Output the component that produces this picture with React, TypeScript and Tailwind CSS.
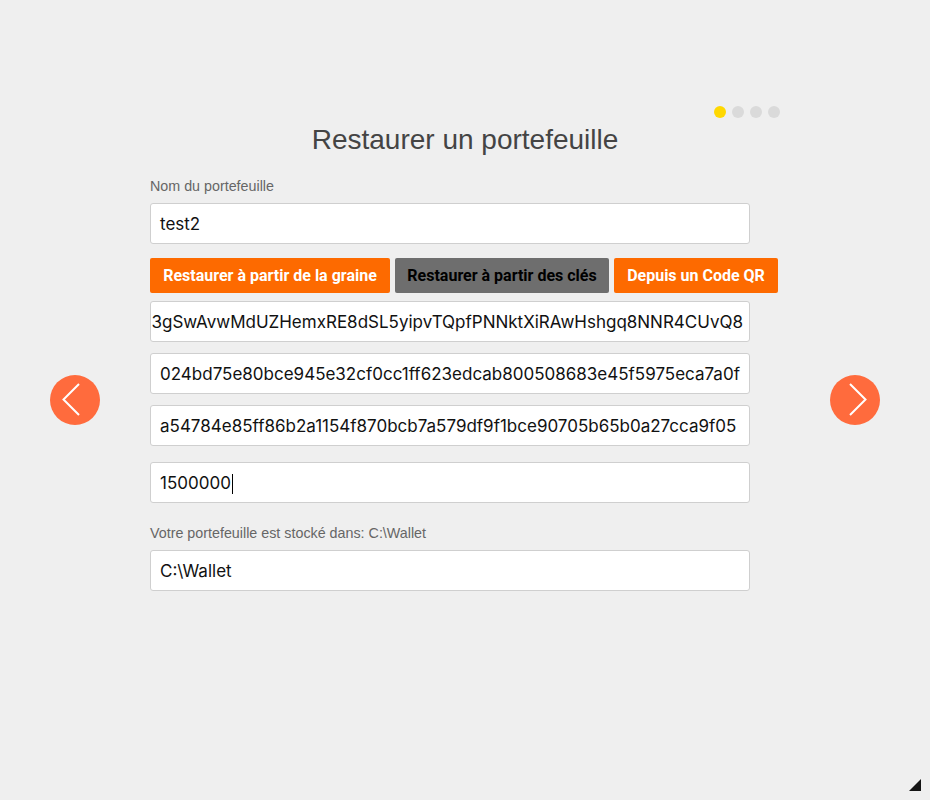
import React from 'react';

const keys = [
  '3gSwAvwMdUZHemxRE8dSL5yipvTQpfPNNktXiRAwHshgq8NNR4CUvQ8',
  '024bd75e80bce945e32cf0cc1ff623edcab800508683e45f5975eca7a0f',
  'a54784e85ff86b2a1154f870bcb7a579df9f1bce90705b65b0a27cca9f05',
];

function Arrow({ dir }: { dir: 'left' | 'right' }) {
  return (
    <button className="w-[50px] h-[50px] rounded-full bg-[#ff6b3d] flex items-center justify-center">
      <svg width="50" height="50" viewBox="0 0 50 50" fill="none">
        {dir === 'left' ? (
          <path d="M29 9 L13.5 24.5 L29 40" stroke="white" strokeWidth="2" />
        ) : (
          <path d="M20 9 L35.5 24.5 L20 40" stroke="white" strokeWidth="2" />
        )}
      </svg>
    </button>
  );
}

function Field({ children, right }: { children: React.ReactNode; right?: boolean }) {
  return (
    <div
      className={
        'w-[600px] h-[41px] bg-white border border-[#cfcfcf] rounded-[3px] px-[9px] pt-[2px] flex items-center overflow-hidden whitespace-nowrap text-[17px] text-[#111] ' +
        (right ? 'justify-end pr-[6px]' : '')
      }
      style={{ fontFamily: 'Inter, "Noto Sans", sans-serif' }}
    >
      {children}
    </div>
  );
}

export default function App() {
  return (
    <div
      className="relative h-[800px] w-full bg-[#efefef] flex overflow-hidden"
      style={{ fontFamily: '"Liberation Sans", Arial, sans-serif' }}
    >
      <div className="w-[100px] pl-[50px] flex items-center">
        <Arrow dir="left" />
      </div>

      <div className="ml-[50px] w-[630px] pt-[106px] flex flex-col">
        <div className="flex justify-end gap-[6px] h-[12px]">
          <span className="w-[12px] h-[12px] rounded-full bg-[#ffd800]" />
          <span className="w-[12px] h-[12px] rounded-full bg-[#dadada]" />
          <span className="w-[12px] h-[12px] rounded-full bg-[#dadada]" />
          <span className="w-[12px] h-[12px] rounded-full bg-[#dadada]" />
        </div>

        <h1 className="mt-[6px] h-[32px] leading-[32px] text-center text-[28px] text-[#444]">
          Restaurer un portefeuille
        </h1>

        <label className="mt-[22px] h-[16px] leading-[16px] text-[14.3px] text-[#666]">Nom du portefeuille</label>
        <div className="mt-[9px]">
          <Field>test2</Field>
        </div>

        <div
          className="mt-[14px] flex gap-[5px] text-[16px] font-bold"
          style={{ fontFamily: 'Roboto, "Liberation Sans", sans-serif' }}
        >
          <button className="h-[35px] w-[240px] rounded-[2px] bg-[#fd6a00] text-white">
            Restaurer à partir de la graine
          </button>
          <button className="h-[35px] w-[214px] rounded-[2px] bg-[#6e6e6e] text-black">
            Restaurer à partir des clés
          </button>
          <button className="h-[35px] w-[164px] rounded-[2px] bg-[#fd6a00] text-white">
            Depuis un Code QR
          </button>
        </div>

        <div className="mt-[8px] flex flex-col gap-[11px]">
          <Field right>{keys[0]}</Field>
          <Field>{keys[1]}</Field>
          <Field>{keys[2]}</Field>
        </div>

        <div className="mt-[16px]">
          <Field>
            1500000
            <span className="inline-block w-px h-[20px] bg-black ml-px" />
          </Field>
        </div>

        <label className="mt-[22px] h-[16px] leading-[16px] text-[14.3px] text-[#666]">
          Votre portefeuille est stocké dans: C:\Wallet
        </label>
        <div className="mt-[9px]">
          <Field>C:\Wallet</Field>
        </div>
      </div>

      <div className="ml-[50px] w-[50px] flex items-center">
        <Arrow dir="right" />
      </div>

      <svg className="absolute right-[9px] bottom-[9px]" width="12" height="12" viewBox="0 0 12 12">
        <path d="M12 0 L12 12 L0 12 Z" fill="#151515" />
      </svg>
    </div>
  );
}
